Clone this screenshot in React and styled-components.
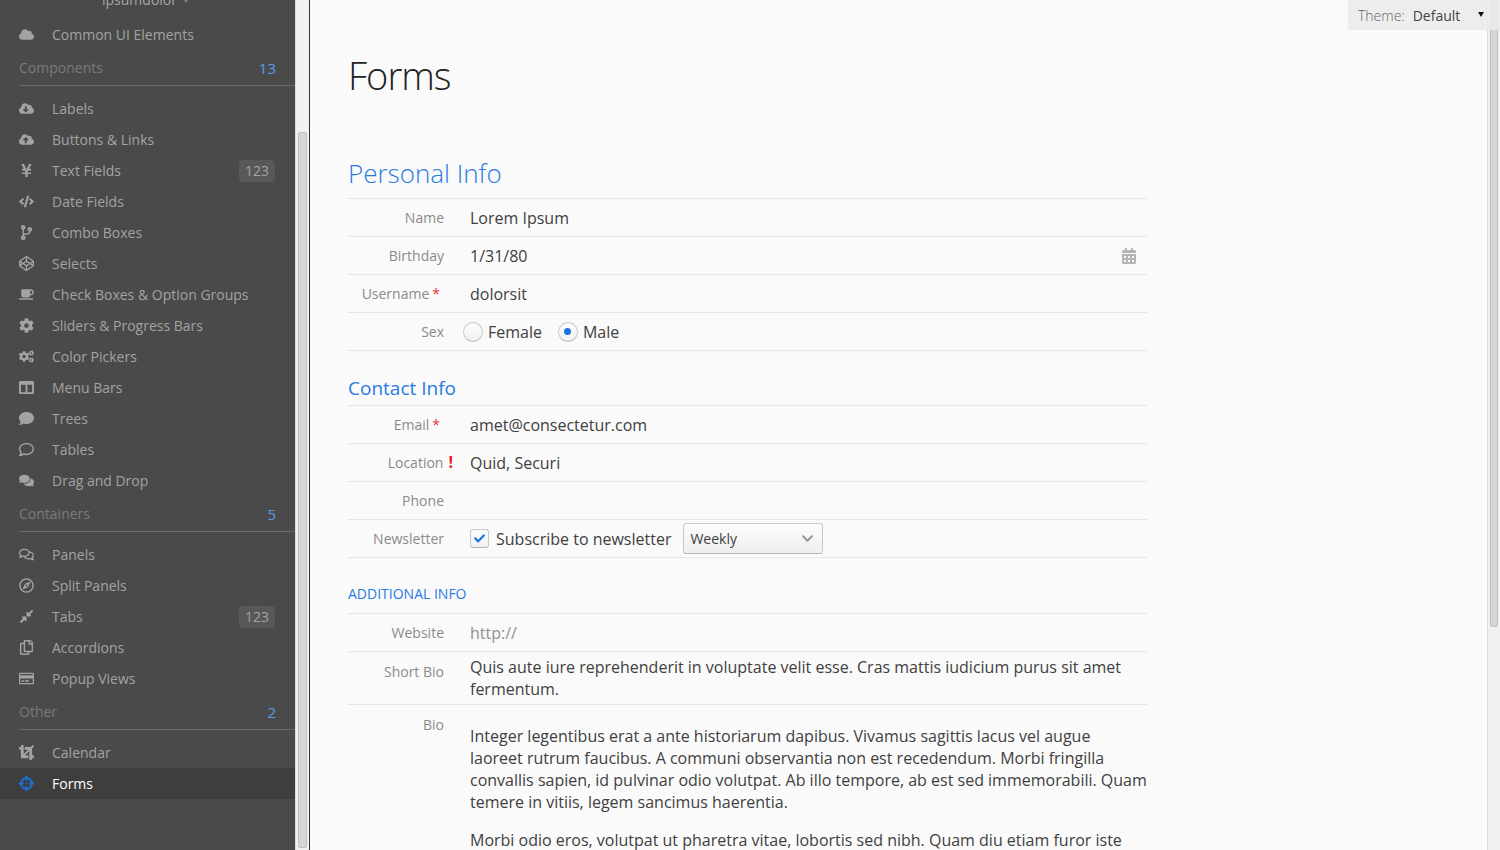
import React from 'react';
import styled, { createGlobalStyle } from 'styled-components';
import {
  FaCloud, FaCloudDownloadAlt, FaCloudUploadAlt, FaYenSign, FaCode, FaCodeBranch, FaCodepen, FaCoffee, FaCog, FaCogs,
  FaColumns, FaComment, FaRegComment, FaComments, FaRegComments, FaRegCompass, FaCompressAlt, FaRegCopy, FaRegCreditCard,
  FaCrop, FaCrosshairs, FaCheck, FaChevronDown, FaCalendarAlt,
} from 'react-icons/fa';

const Global = createGlobalStyle`
  html, body { margin: 0; padding: 0; height: 100%; overflow: hidden; background: #fafafa; }
  body { font-family: "Open Sans", "Noto Sans", sans-serif; }
`;

const Page = styled.div`
  display: flex;
  height: 850px;
  width: 1500px;
  overflow: hidden;
  position: relative;
`;

const Sidebar = styled.nav`
  width: 295px;
  flex: none;
  background: #4a4a4a;
  overflow: hidden;
  color: #a6a6a6;
`;

const UserLine = styled.div`
  margin-top: -8px;
  height: 16px;
  padding-left: 102px;
  font-size: 14px;
  line-height: 16px;
  color: #a6a6a6;
  display: flex;
  gap: 6px;
  align-items: center;
`;

const Caret = styled.span`
  width: 0;
  height: 0;
  border-left: 3px solid transparent;
  border-right: 3px solid transparent;
  border-top: 4px solid #808080;
  margin-top: 1px;
`;

const TopGroup = styled.div`
  margin-top: 11px;
`;

const Section = styled.div`
  margin: ${p => p.$top}px 0 7px 19px;
  height: 35px;
  border-bottom: 1px solid #696969;
  display: flex;
  justify-content: space-between;
  align-items: center;
  padding-right: 19px;
  font-size: 14px;
  color: #7b7b7b;
  box-sizing: content-box;
`;

const Count = styled.span`
  font-size: 15px;
  color: #5c9ae6;
`;

const Item = styled.div`
  height: 31px;
  display: flex;
  align-items: center;
  padding: 0 20px 0 19px;
  font-size: 14px;
  color: ${p => (p.$active ? '#ffffff' : '#a3a3a3')};
  background: ${p => (p.$active ? '#3e3e3e' : 'transparent')};
`;

const IconCell = styled.span`
  width: 15px;
  display: flex;
  justify-content: center;
  font-size: 15px;
  color: ${p => (p.$active ? '#1d6fd6' : '#a3a3a3')};
  margin-right: 18px;
`;

const Badge = styled.span`
  margin-left: auto;
  width: 36px;
  height: 22px;
  background: #585858;
  border-radius: 4px;
  text-align: center;
  line-height: 22px;
  font-size: 14px;
  color: #a3a3a3;
`;

const Track = styled.div`
  width: ${p => p.$w}px;
  flex: none;
  background: #f1f1f1;
  border-left: 1px solid #dcdcdc;
  box-sizing: border-box;
  padding: ${p => p.$top}px 2px 0 2px;
`;

const Thumb = styled.div`
  height: ${p => p.$h}px;
  background: #d6d6d6;
  border: 1px solid #c2c2c2;
  border-radius: 2px;
  box-sizing: border-box;
`;

const Divider = styled.div`
  width: 1px;
  flex: none;
  background: #333;
`;

const Main = styled.main`
  flex: 1;
  min-width: 0;
  padding-left: 38px;
  background: #fafafa;
  color: #444;
  overflow: hidden;
`;

const Form = styled.div`
  width: 799px;
`;

const Title = styled.h1`
  margin: 47px 0 0;
  font-size: 38px;
  line-height: 56px;
  font-weight: 300;
  letter-spacing: -1px;
  color: #222;
`;

const H2 = styled.h2`
  margin: 45px 0 0;
  height: 51px;
  line-height: 50px;
  box-sizing: border-box;
  font-size: 26px;
  font-weight: 300;
  color: #2a7ae2;
  border-bottom: 1px solid #e6e6e6;
`;

const H3 = styled.h3`
  margin: 22px 0 0;
  height: 33px;
  line-height: 30px;
  box-sizing: border-box;
  font-size: 19px;
  font-weight: 400;
  color: #2a7ae2;
  border-bottom: 1px solid #e6e6e6;
`;

const H4 = styled.h4`
  margin: 23px 0 0;
  height: 33px;
  line-height: 26px;
  box-sizing: border-box;
  font-size: 14px;
  font-weight: 400;
  text-transform: uppercase;
  color: #2a7ae2;
  border-bottom: 1px solid #e6e6e6;
`;

const Row = styled.div`
  display: flex;
  align-items: ${p => (p.$top ? 'flex-start' : 'center')};
  min-height: 37px;
  border-bottom: ${p => (p.$last ? 'none' : '1px solid #e6e6e6')};
`;

const Label = styled.label`
  width: 96px;
  flex: none;
  text-align: right;
  font-size: 14px;
  color: #8a8a8a;
  line-height: 19px;
  padding-top: ${p => p.$pt || 0}px;
`;

const Required = styled.span`
  color: #e8323c;
  margin-left: 3px;
  margin-right: 4px;
`;

const Invalid = styled.span`
  color: #e8232c;
  font-weight: 700;
  font-size: 16px;
  margin-left: 5px;
  margin-right: -9px;
`;

const Value = styled.div`
  flex: 1;
  margin-left: 26px;
  font-size: 16px;
  line-height: 22px;
  color: ${p => (p.$muted ? '#8f8f8f' : '#404040')};
  display: flex;
  align-items: center;
  justify-content: space-between;
  padding-right: 10px;
`;

const CalendarIcon = styled(FaCalendarAlt)`
  font-size: 16px;
  color: #b4b4b4;
`;

const Radios = styled.div`
  margin-left: 19px;
  display: flex;
  align-items: center;
  font-size: 16px;
  color: #404040;
`;

const Radio = styled.span`
  width: 19px;
  height: 19px;
  border-radius: 50%;
  border: 1px solid #c8c8c8;
  border-bottom-color: #b5b5b5;
  background: linear-gradient(#fdfdfd, #f0f0f0);
  margin-right: 5px;
  display: flex;
  align-items: center;
  justify-content: center;
  box-sizing: content-box;
  width: 18px;
  height: 18px;
  &::after {
    content: '';
    display: ${p => (p.$on ? 'block' : 'none')};
    width: 7px;
    height: 7px;
    border-radius: 50%;
    background: #1a73e0;
  }
`;

const RadioLabel = styled.span`
  margin-right: 16px;
`;

const CheckRow = styled.div`
  margin-left: 26px;
  display: flex;
  align-items: center;
  font-size: 16px;
  color: #404040;
`;

const CheckBox = styled.span`
  width: 17px;
  height: 17px;
  border: 1px solid #c8c8c8;
  border-bottom-color: #b5b5b5;
  border-radius: 3px;
  background: linear-gradient(#fdfdfd, #f0f0f0);
  display: flex;
  align-items: center;
  justify-content: center;
  font-size: 11px;
  color: #1a73e0;
  margin-right: 7px;
`;

const Select = styled.div`
  margin-left: 12px;
  width: 138px;
  height: 29px;
  border: 1px solid #c8c8c8;
  border-bottom-color: #b5b5b5;
  border-radius: 3px;
  background: linear-gradient(#fcfcfc, #efefef);
  display: flex;
  align-items: center;
  justify-content: space-between;
  padding: 0 8px 0 6px;
  box-sizing: content-box;
  width: 124px;
  font-size: 14px;
  color: #404040;
`;

const SelectArrow = styled(FaChevronDown)`
  font-size: 13px;
  color: #999;
`;

const Para = styled.p`
  margin: 0 0 16px;
`;

const BioText = styled.div`
  flex: 1;
  margin: 20px 0 0 26px;
  font-size: 16px;
  line-height: 22px;
  color: #404040;
`;

const ShortBio = styled.div`
  flex: 1;
  margin: 4px 10px 4px 26px;
  font-size: 16px;
  line-height: 22px;
  color: #404040;
`;

const ThemeBox = styled.div`
  position: absolute;
  top: 0;
  right: 0;
  width: 152px;
  height: 30px;
  padding-left: 10px;
  box-sizing: border-box;
  background: rgba(235, 235, 235, 0.9);
  border-bottom-left-radius: 4px;
  display: flex;
  align-items: center;
  font-size: 14px;
  color: #444;
`;

const ThemeLabel = styled.span`
  color: #666;
  margin-right: 8px;
  font-weight: 300;
`;

const ThemeCaret = styled.span`
  position: absolute;
  right: 16px;
  top: 12px;
  width: 0;
  height: 0;
  border-left: 3px solid transparent;
  border-right: 3px solid transparent;
  border-top: 5px solid #111;
`;

const groups = [
  { title: 'Components', count: 13, top: 0, items: [
    [FaCloudDownloadAlt, 'Labels'], [FaCloudUploadAlt, 'Buttons & Links'], [FaYenSign, 'Text Fields', 123],
    [FaCode, 'Date Fields'], [FaCodeBranch, 'Combo Boxes'], [FaCodepen, 'Selects'],
    [FaCoffee, 'Check Boxes & Option Groups'], [FaCog, 'Sliders & Progress Bars'], [FaCogs, 'Color Pickers'],
    [FaColumns, 'Menu Bars'], [FaComment, 'Trees'], [FaRegComment, 'Tables'], [FaComments, 'Drag and Drop'],
  ] },
  { title: 'Containers', count: 5, top: 0, items: [
    [FaRegComments, 'Panels'], [FaRegCompass, 'Split Panels'], [FaCompressAlt, 'Tabs', 123],
    [FaRegCopy, 'Accordions'], [FaRegCreditCard, 'Popup Views'],
  ] },
  { title: 'Other', count: 2, top: 0, items: [
    [FaCrop, 'Calendar'], [FaCrosshairs, 'Forms', null, true],
  ] },
];

function NavItem({ icon: Icon, text, badge, active }) {
  return (
    <Item $active={active}>
      <IconCell $active={active}><Icon /></IconCell>
      {text}
      {badge ? <Badge>{badge}</Badge> : null}
    </Item>
  );
}

export default function App() {
  return (
    <Page>
      <Global />
      <Sidebar>
        <UserLine>ipsumdolor<Caret /></UserLine>
        <TopGroup><NavItem icon={FaCloud} text="Common UI Elements" /></TopGroup>
        {groups.map(g => (
          <React.Fragment key={g.title}>
            <Section $top={g.top}>{g.title}<Count>{g.count}</Count></Section>
            {g.items.map(([icon, text, badge, active]) => (
              <NavItem key={text} icon={icon} text={text} badge={badge} active={active} />
            ))}
          </React.Fragment>
        ))}
      </Sidebar>
      <Track $w={14} $top={132}><Thumb $h={716} /></Track>
      <Divider />
      <Main>
        <Form>
          <Title>Forms</Title>
          <H2>Personal Info</H2>
          <Row><Label>Name</Label><Value>Lorem Ipsum</Value></Row>
          <Row><Label>Birthday</Label><Value>1/31/80<CalendarIcon /></Value></Row>
          <Row><Label>Username<Required>*</Required></Label><Value>dolorsit</Value></Row>
          <Row>
            <Label>Sex</Label>
            <Radios>
              <Radio /><RadioLabel>Female</RadioLabel>
              <Radio $on /><RadioLabel>Male</RadioLabel>
            </Radios>
          </Row>
          <H3>Contact Info</H3>
          <Row><Label>Email<Required>*</Required></Label><Value>amet@consectetur.com</Value></Row>
          <Row><Label>Location<Invalid>!</Invalid></Label><Value>Quid, Securi</Value></Row>
          <Row><Label>Phone</Label><Value /></Row>
          <Row>
            <Label>Newsletter</Label>
            <CheckRow>
              <CheckBox><FaCheck /></CheckBox>Subscribe to newsletter
              <Select>Weekly<SelectArrow /></Select>
            </CheckRow>
          </Row>
          <H4>Additional Info</H4>
          <Row><Label>Website</Label><Value $muted>http://</Value></Row>
          <Row $top>
            <Label $pt={10}>Short Bio</Label>
            <ShortBio>Quis aute iure reprehenderit in voluptate velit esse. Cras mattis iudicium purus sit amet fermentum.</ShortBio>
          </Row>
          <Row $top $last>
            <Label $pt={10}>Bio</Label>
            <BioText>
              <Para>Integer legentibus erat a ante historiarum dapibus. Vivamus sagittis lacus vel augue laoreet rutrum faucibus. A communi observantia non est recedendum. Morbi fringilla convallis sapien, id pulvinar odio volutpat. Ab illo tempore, ab est sed immemorabili. Quam temere in vitiis, legem sancimus haerentia.</Para>
              <Para>Morbi odio eros, volutpat ut pharetra vitae, lobortis sed nibh. Quam diu etiam furor iste tuus nos eludet? Petierunt uti sibi concilium totius Galliae in diem certam indicere.</Para>
            </BioText>
          </Row>
        </Form>
      </Main>
      <Track $w={13} $top={0}><Thumb $h={627} /></Track>
      <ThemeBox>
        <ThemeLabel>Theme:</ThemeLabel>Default<ThemeCaret />
      </ThemeBox>
    </Page>
  );
}
